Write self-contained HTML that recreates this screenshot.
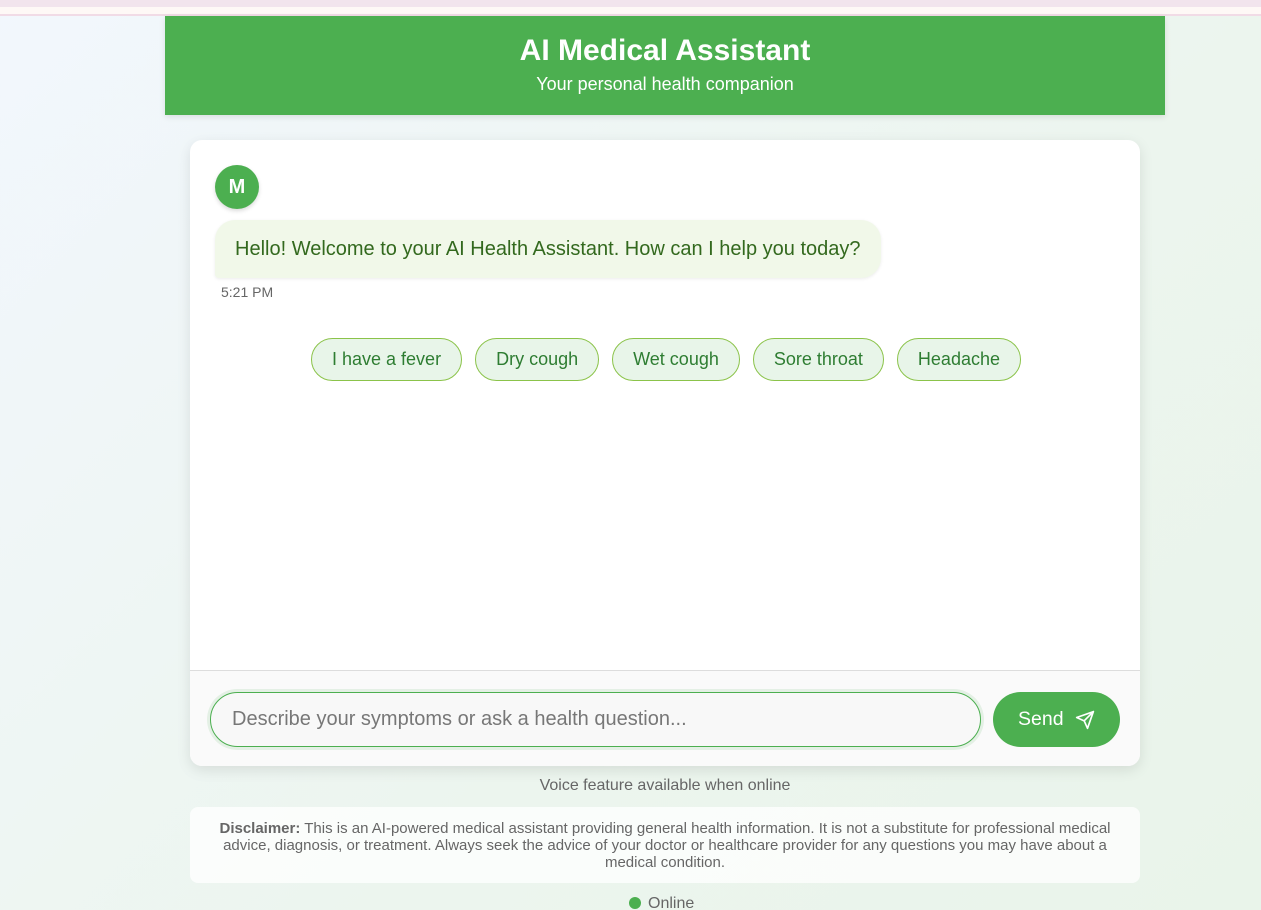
<!DOCTYPE html>
<html><head><meta charset="utf-8"><style>
*{box-sizing:border-box;margin:0;padding:0}
html,body{width:1261px;height:910px;overflow:hidden}
body{font-family:"Liberation Sans",Arial,sans-serif;background:linear-gradient(135deg,#f2f7fd 0%,#ecf5ee 60%,#e9f4ea 100%);position:relative}
.top1{position:absolute;left:0;top:0;width:1261px;height:7px;background:#f2e4ed}
.top2{position:absolute;left:0;top:7px;width:1261px;height:7px;background:#fef8f6}
.top3{position:absolute;left:0;top:14px;width:1261px;height:2px;background:#f1dbe6}
.header{position:absolute;left:165px;top:16px;width:1000px;height:99px;background:#4caf50;color:#fff;text-align:center;box-shadow:0 2px 6px rgba(0,0,0,.1)}
.header h1{font-size:30px;font-weight:bold;margin-top:18px;line-height:34px}
.header p{font-size:18px;margin-top:6px}
.card{position:absolute;left:190px;top:140px;width:950px;height:626px;background:#fff;border-radius:12px;box-shadow:0 4px 14px rgba(0,0,0,.1);overflow:hidden}
.av{position:absolute;left:25px;top:25px;width:44px;height:44px;border-radius:50%;background:#4caf50;color:#fff;font-weight:bold;font-size:20px;text-align:center;line-height:44px;box-shadow:0 2px 4px rgba(0,0,0,.15)}
.bub{position:absolute;left:25px;top:80px;width:666px;height:58px;background:#f1f8e9;border-radius:20px 20px 20px 4px;color:#33691e;font-size:20px;line-height:58px;padding-left:20px;box-shadow:0 1px 3px rgba(0,0,0,.08);white-space:nowrap}
.time{position:absolute;left:31px;top:144px;font-size:14px;color:#666}
.chips{position:absolute;left:121px;top:198px;display:flex;gap:13px}
.chip{height:43px;padding:0 20px;border:1px solid #8bc34a;border-radius:22px;background:#e8f5e9;color:#2e7d32;font-size:18px;line-height:41px}
.foot{position:absolute;left:0;top:530px;width:950px;height:96px;background:#fafafa;border-top:1px solid #ddd}
.inp{position:absolute;left:20px;top:21px;width:771px;height:55px;border:1px solid #4caf50;border-radius:28px;background:#f8f8f8;box-shadow:0 0 0 3px rgba(76,175,80,.12);font-size:20px;color:#777;line-height:53px;padding-left:21px}
.send{position:absolute;left:803px;top:21px;width:127px;height:55px;border-radius:28px;background:#4caf50;color:#fff;font-size:19.5px;line-height:55px;padding-left:25px}
.send svg{position:absolute;left:82px;top:18px}
.voice{position:absolute;left:190px;width:950px;top:777px;text-align:center;font-size:16px;color:#666}
.disc{position:absolute;left:190px;top:807px;width:950px;height:76px;background:rgba(255,255,255,.75);border-radius:8px;text-align:center;font-size:15px;color:#666;line-height:17px;padding:13px 20px 0}
.online{position:absolute;left:629px;top:895px;font-size:16px;color:#666}
.online i{display:inline-block;width:12px;height:12px;border-radius:50%;background:#4caf50;margin-right:7px;vertical-align:-1px}
</style></head><body>
<div class="top1"></div><div class="top2"></div><div class="top3"></div>
<div class="header"><h1>AI Medical Assistant</h1><p>Your personal health companion</p></div>
<div class="card">
<div class="av">M</div>
<div class="bub">Hello! Welcome to your AI Health Assistant. How can I help you today?</div>
<div class="time">5:21 PM</div>
<div class="chips"><div class="chip">I have a fever</div><div class="chip">Dry cough</div><div class="chip">Wet cough</div><div class="chip">Sore throat</div><div class="chip">Headache</div></div>
<div class="foot">
<div class="inp">Describe your symptoms or ask a health question...</div>
<div class="send">Send<svg width="20" height="20" viewBox="0 0 24 24" fill="none" stroke="#fff" stroke-width="2" stroke-linejoin="round" stroke-linecap="round"><path d="M22 2L11 13"/><path d="M22 2L15 22L11 13L2 9Z"/></svg></div>
</div>
</div>
<div class="voice">Voice feature available when online</div>
<div class="disc"><b>Disclaimer:</b> This is an AI-powered medical assistant providing general health information. It is not a substitute for professional medical advice, diagnosis, or treatment. Always seek the advice of your doctor or healthcare provider for any questions you may have about a medical condition.</div>
<div class="online"><i></i>Online</div>
</body></html>
